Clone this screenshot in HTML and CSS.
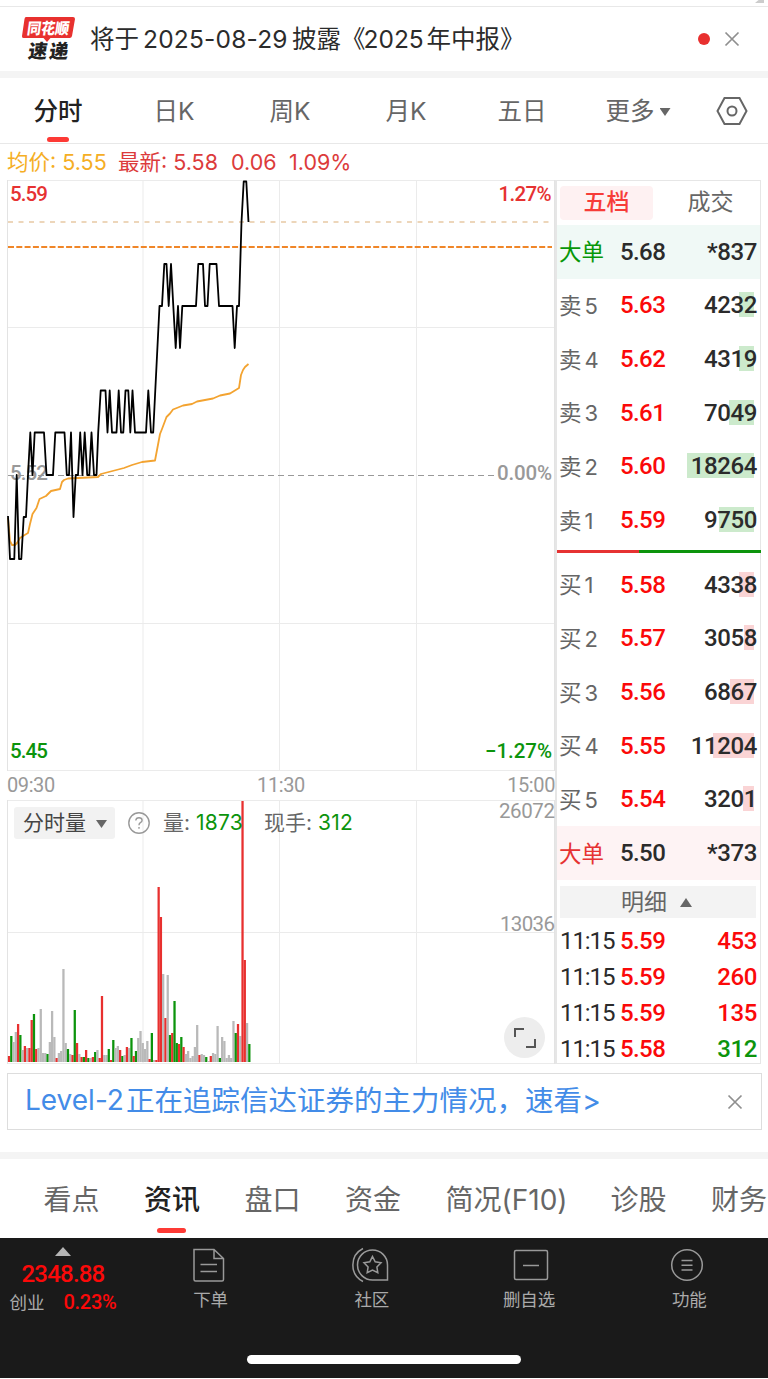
FILE: index.html
```html
<!DOCTYPE html>
<html lang="zh-CN">
<head>
    <meta charset="UTF-8">
    <meta name="viewport" content="width=device-width, initial-scale=1.0">
    <title>分时</title>
    <link rel="stylesheet" href="styles.css">
</head>
<body>
    <div class="top-edge"><i></i></div>

    <!-- Notice -->
    <header class="notice">
        <svg class="logo" width="56" height="48" viewBox="0 0 56 48">
            <path d="M5 2H52Q54 2 54 4L51 21Q50.600 23 48.600 23H29.500L26 27L22.500 23H2.500Q.600 23 1 21L3.500 4Q3.800 2 5 2Z" fill="#e8312f"/>
            <text class="logo-text" transform="translate(5.500 18.500) skewX(-8)" font-size="15.500" fill="#fff" textLength="42" lengthAdjust="spacingAndGlyphs">同花顺</text>
            <text class="logo-text" transform="translate(6.500 42.500) skewX(-8)" font-size="19" fill="#222" textLength="40">速递</text>
        </svg>
        <div class="notice-text"><span>将于</span><span class="date">2025-08-29</span><span>披露《</span><span class="year">2025</span><span>年中报》</span></div>
        <span class="dot"></span>
        <svg class="close" width="16" height="16" viewBox="0 0 16 16"><path d="M1.500 1.500L14.500 14.500M14.500 1.500L1.500 14.500"/></svg>
    </header>

    <!-- Period tabs -->
    <nav class="periods">
        <span class="active">分时</span>
        <span>日K</span>
        <span>周K</span>
        <span>月K</span>
        <span>五日</span>
        <span>更多<i class="caret-down"></i></span>
        <svg width="32" height="30" viewBox="0 0 32 30">
            <path d="M8.500 2H23.500L30.500 15L23.500 28H8.500L1.500 15Z"/>
            <circle cx="16" cy="15" r="4.500"/>
        </svg>
    </nav>

    <div class="summary">
        <span class="avg">均价: 5.55</span>
        <span>最新: 5.58</span>
        <span>0.06</span>
        <span>1.09%</span>
    </div>

    <main class="main">
        <div class="charts">
            <!-- Price chart -->
            <svg class="price" width="548" height="591" viewBox="7 180 548 591">
                <path class="grid" d="M7 180.500H555M7 327.500H555M7 623.500H555M7 770.500H555M143 180V771M279.500 180V771M416.500 180V771"/>
                <path class="grid edge" d="M7.500 180V771M554.500 180V771"/>
                <path class="dash last" d="M8 222H552"/>
                <path class="dash cost" d="M8 247H552"/>
                <path class="dash zero" d="M8 475.500H497"/>
                <text class="num gray" x="10" y="479.500" textLength="38">5.52</text>
                <polyline class="avg-line" points="8,518 10,541 12,545 15,545 17,543 20,538 23,536 28,533 30,524 32.500,514 36.500,508 39.500,499 46,496 51,491 60,489 62,482 64,480 68,478.500 98,477 101,474 124,468 132,465 142,462 155,460.500 157,450 160,434 162,429 166.500,417 170,413.500 173,409.500 183,405.500 192,404 197,401.500 213,398.500 220,395.500 230,393.500 239,388 241,375 243,370 245,367 248.500,364"/>
                <polyline class="price-line" points="8,516 10,559 14.300,559 16.700,475 19,559 21.300,559 23.700,517 26,517 28,475 30.300,432.500 32.500,475 34.700,432.500 44,432.500 46.500,475 53,475 55.300,432.500 64.500,432.500 66.800,475 69,475 71,432.500 73.500,517 75.700,475 78,475 80.200,432.500 82.500,475 84.700,432.500 87.200,475 89.300,475 91.500,432.500 94,475 96.500,475 98.200,432.500 100.700,390.500 105.500,390.500 107.500,432.500 109.700,390.500 112,432.500 116.500,432.500 118.700,390.500 121,432.500 123.300,432.500 125.500,390.500 128.300,390.500 130.300,432.500 132.500,390.500 135,432.500 146,432.500 148.300,390.500 151,432.500 153.200,432.500 155.300,390 159.500,306 162,306 164.300,264 166.500,264 168.700,306 171,264 173.300,306 175.700,348 178,306 180,348 182.300,306 196,306 198.300,264 203,264 205,306 207.500,306 209.700,264 216.500,264 219,306 232.500,306 234.700,348 237,306 239,306 241.500,222 243.700,181.500 246.300,181.500 248.500,222"/>
                <text class="num red" x="10" y="200.500" textLength="38">5.59</text>
                <text class="num red" x="498.500" y="200.500" textLength="53">1.27%</text>
                <text class="num gray" x="497" y="479.500" textLength="55">0.00%</text>
                <text class="num green" x="10" y="758" textLength="38">5.45</text>
                <text class="num green" x="485" y="758" textLength="67">−1.27%</text>
            </svg>

            <div class="axis"><span>09:30</span><span>11:30</span><span>15:00</span></div>

            <!-- Volume chart -->
            <div class="volume">
                <svg width="548" height="264" viewBox="7 800 548 264">
                    <path class="grid" d="M7 800.500H555M7 932.500H555M7 1063.500H555M143 800V1064M279.500 800V1064M416.500 800V1064"/>
                    <path class="grid edge" d="M7.500 800V1064M554.500 800V1064"/>
                    <g id="bars"></g>
                    <text class="num gray thin" x="499" y="818" textLength="56">26072</text>
                    <text class="num gray thin" x="500" y="931" textLength="55">13036</text>
                </svg>
                <div class="volume-bar">
                    <span class="picker">分时量<i class="caret-down"></i></span>
                    <svg width="24" height="24" viewBox="0 0 24 24"><circle cx="12" cy="12" r="10.200"/><path d="M8.800 9.500Q9 6.700 12 6.700T15.100 9.300Q15.100 10.700 13.400 11.700Q12 12.600 12 14.300M12 16V17.700"/></svg>
                    <span class="vol">量: <b>1873</b></span>
                    <span>现手: <b>312</b></span>
                </div>
                <span class="expand"><svg width="24" height="24" viewBox="0 0 24 24"><path d="M2 11V3H11M22 13V21H13"/></svg></span>
            </div>
        </div>

        <!-- Order book -->
        <aside class="book">
            <div class="book-tabs"><span class="active">五档</span><span>成交</span></div>
            <div class="row big sell"><span>大单</span><b>5.68</b><em>*837</em></div>
            <div class="row sell"><span>卖<i>5</i></span><b>5.63</b><em style="--w: 15px">4232</em></div>
            <div class="row sell"><span>卖<i>4</i></span><b>5.62</b><em style="--w: 15.5px">4319</em></div>
            <div class="row sell"><span>卖<i>3</i></span><b>5.61</b><em style="--w: 25px">7049</em></div>
            <div class="row sell"><span>卖<i>2</i></span><b>5.60</b><em style="--w: 67px">18264</em></div>
            <div class="row sell"><span>卖<i>1</i></span><b>5.59</b><em style="--w: 35px">9750</em></div>
            <div class="ratio"></div>
            <div class="row buy"><span>买<i>1</i></span><b>5.58</b><em style="--w: 15px">4338</em></div>
            <div class="row buy"><span>买<i>2</i></span><b>5.57</b><em style="--w: 10.5px">3058</em></div>
            <div class="row buy"><span>买<i>3</i></span><b>5.56</b><em style="--w: 24px">6867</em></div>
            <div class="row buy"><span>买<i>4</i></span><b>5.55</b><em style="--w: 41px">11204</em></div>
            <div class="row buy"><span>买<i>5</i></span><b>5.54</b><em style="--w: 11px">3201</em></div>
            <div class="row big buy"><span>大单</span><b>5.50</b><em>*373</em></div>
            <div class="detail-head">明细<i></i></div>
            <div class="tick"><span>11:15</span><b>5.59</b><em>453</em></div>
            <div class="tick"><span>11:15</span><b>5.59</b><em>260</em></div>
            <div class="tick"><span>11:15</span><b>5.59</b><em>135</em></div>
            <div class="tick"><span>11:15</span><b>5.58</b><em class="down">312</em></div>
        </aside>
    </main>

    <div class="banner">
        <span class="banner-en">Level-2</span><span>正在追踪信达证券的主力情况，速看&gt;</span>
        <svg class="close" width="16" height="16" viewBox="0 0 16 16"><path d="M1.500 1.500L14.500 14.500M14.500 1.500L1.500 14.500"/></svg>
    </div>

    <nav class="sections">
        <span>看点</span>
        <span class="active">资讯</span>
        <span>盘口</span>
        <span>资金</span>
        <span class="profile">简况(F10)</span>
        <span>诊股</span>
        <span>财务</span>
    </nav>

    <!-- Bottom bar -->
    <footer class="bottom">
        <div class="index">
            <i class="caret-up"></i>
            <strong>2348.88</strong>
            <div><span>创业</span><b>0.23%</b></div>
        </div>
        <div class="action order">
            <svg width="36" height="36" viewBox="0 0 36 36"><path d="M3 2.500H23L32.500 11.500V32.500Q32.500 34 31 34H4.500Q3 34 3 32.500ZM23 2.500V11.500H32.500M9.500 17.500H26M9.500 24.500H26"/></svg>
            <span>下单</span>
        </div>
        <div class="action club">
            <svg width="40" height="36" viewBox="0 0 40 36"><path d="M22.500 3A15 15 0 0 0 22.500 33H37.500V18A15 15 0 0 0 22.500 3ZM13 1.500A18.500 18.500 0 0 0 13 34.500"/><path d="M22.500 9.500L25.200 14.800L31 15.700L26.900 19.900L27.800 25.700L22.500 23L17.200 25.700L18.100 19.900L14 15.700L19.800 14.800Z"/></svg>
            <span>社区</span>
        </div>
        <div class="action remove">
            <svg width="36" height="36" viewBox="0 0 36 36"><rect x="1.500" y="3.500" width="33" height="29" rx="1.500"/><path d="M10 18.500H26"/></svg>
            <span>删自选</span>
        </div>
        <div class="action more">
            <svg width="36" height="36" viewBox="0 0 36 36"><circle cx="18" cy="18" r="15.300"/><path d="M12.500 13.500H23.500M12.500 18.200H23.500M12.500 22.900H23.500"/></svg>
            <span>功能</span>
        </div>
        <div class="home"></div>
    </footer>

    <script>
        // One entry per minute: r = up, g = down, n = flat
        const data = 'r6 g26 n20 n30 r38 g27 n12 r16 n14 r14 r42 g48 r13 n14 n53 n9 n9 g8 n20 n51 n25 r4 n9 n11 n93 n19 g13 n8 r7 g52 ' +
            'r19 n8 r5 g5 r12 g4 n4 r5 g10 n12 r4 r66 n7 n7 g13 r2 g22 n14 n16 r12 g6 n7 r15 n14 g24 r6 g11 n24 n31 n19 ' +
            'n13 n21 r3 g29 n2 r2 r175 r145 n88 r44 n87 g27 r29 g61 g19 r18 g25 r15 n8 n11 n4 n6 n15 n37 r7 n8 n7 g5 n1 r6 ' +
            'n9 n8 n36 g4 n25 n21 n4 n7 n4 n41 g29 r38 n26 r261 r102 n39 g18';
        const colors = { r: '#e8302f', g: '#0c940c', n: '#b9b9b9' };

        document.getElementById('bars').innerHTML = data.split(' ').map(function(item, i) {
            const h = Number(item.slice(1));
            const x = (7.9 + i * 2.267).toFixed(2);
            return '<rect x="' + x + '" y="' + (1062 - h) + '" width="2.27" height="' + h + '" fill="' + colors[item[0]] + '"/>';
        }).join('');
    </script>
</body>
</html>
```

FILE: styles.css
```css
:root {
    --red: #e63232;
    --bright-red: #fb0909;
    --green: #0c940c;
    --text: #2b2b2b;
    --text-gray: #666;
    --text-muted: #999;
    --sans: Inter, "Noto Sans CJK SC", sans-serif;
    --digits: Roboto, "Noto Sans CJK SC", sans-serif;
}

* {
    box-sizing: border-box;
}

body {
    margin: 0;
    width: 768px;
    height: 1379px;
    overflow: hidden;
    background: #fff;
    color: var(--text);
    font-family: var(--sans);
    white-space: nowrap;
}

i, em {
    font-style: normal;
}

svg {
    display: block;
    flex: none;
}

.top-edge {
    display: flex;
    justify-content: flex-end;
    height: 7px;
    padding-right: 4px;
    border-bottom: 1px solid #e8e8e8;
}

.top-edge i {
    width: 9px;
    height: 3px;
    background: #ccc;
    clip-path: polygon(40% 0, 100% 0, 100% 100%, 0 100%);
}

/* Notice */
.notice {
    display: flex;
    align-items: center;
    height: 71px;
    padding: 0 28px 7px 21px;
    border-bottom: 7px solid #f4f4f4;
}

.notice .logo {
    margin: 7px 13px 0 0;
}

.logo-text {
    font-family: "Noto Sans CJK SC", sans-serif;
    font-weight: 900;
}

.notice-text {
    display: flex;
    align-items: center;
    font-size: 24.5px;
    line-height: 36px;
    margin-top: 7px;
}

.notice-text .date {
    width: 153px;
    padding-left: 4px;
    letter-spacing: .2px;
}

.notice-text .year {
    width: 63px;
    margin-left: -2px;
}

.dot {
    width: 12px;
    height: 12px;
    margin: 7px 14px 0 auto;
    border-radius: 50%;
    background: #e8302f;
}

.close {
    fill: none;
    stroke: #8f8f8f;
    stroke-width: 1.7;
}

.notice .close {
    margin-top: 6px;
}

/* Period tabs */
.periods {
    display: grid;
    grid-template-columns: repeat(6, 116px) 72px;
    place-items: center;
    height: 66px;
    border-bottom: 1px solid #e8e8e8;
    color: var(--text-gray);
    font-size: 24.5px;
    line-height: 66px;
}

.periods span {
    height: 65px;
    line-height: 67px;
}

.periods .active,
.sections .active {
    position: relative;
    color: #222;
    font-weight: 500;
}

.periods .active::after,
.sections .active::after {
    content: "";
    position: absolute;
    left: 50%;
    bottom: 1px;
    width: 22px;
    height: 5px;
    margin-left: -11px;
    border-radius: 3px;
    background: #fd3a35;
}

.periods svg {
    fill: none;
    stroke: var(--text-gray);
    stroke-width: 2;
}

.caret-down {
    display: inline-block;
    width: 11px;
    height: 8px;
    margin-left: 5px;
    vertical-align: 4px;
    background: #666;
    clip-path: polygon(0 0, 100% 0, 50% 100%);
}

.summary {
    display: grid;
    grid-template-columns: 111px 113px 58px auto;
    height: 36px;
    padding-left: 7px;
    color: #dc3b3b;
    font-size: 21.5px;
    line-height: 36px;
}

.summary .avg {
    color: #f5ae24;
}

/* Charts */
.main {
    display: grid;
    grid-template-columns: 548px 206px;
    grid-template-rows: 884px;
    padding-left: 7px;
}

.grid {
    fill: none;
    stroke: #ebebeb;
}

.edge {
    stroke: #e3e3e3;
}

.dash {
    fill: none;
}

.last {
    stroke: #e8c9a4;
    stroke-width: 1.4;
    stroke-dasharray: 5 5.5;
}

.cost {
    stroke: #f08628;
    stroke-width: 1.8;
    stroke-dasharray: 6 2.3;
}

.zero {
    stroke: #999;
    stroke-dasharray: 6 4;
}

.avg-line,
.price-line {
    fill: none;
    stroke: #f3a330;
    stroke-width: 1.8;
    stroke-linejoin: round;
}

.price-line {
    stroke: #000;
}

.num {
    font: 500 20.5px var(--digits);
}

.red { fill: var(--red); }
.green { fill: var(--green); }
.gray { fill: #999; }

.num.thin {
    font-weight: 400;
}

.axis {
    display: flex;
    justify-content: space-between;
    height: 29px;
    color: var(--text-muted);
    font: 400 20px/29px var(--digits);
    letter-spacing: -.4px;
}

.volume {
    position: relative;
}

.volume-bar {
    position: absolute;
    top: 7px;
    left: 7px;
    display: flex;
    align-items: center;
    height: 32px;
    color: var(--text-gray);
    font-size: 21px;
    line-height: 34px;
}

.picker {
    width: 101px;
    margin-right: 12px;
    padding-left: 9px;
    border-radius: 3px;
    background: #f2f2f2;
    color: #444;
    line-height: 32px;
}

.picker .caret-down {
    margin-left: 10px;
    vertical-align: 2px;
}

.volume-bar svg {
    margin-right: 12px;
    fill: none;
    stroke: var(--text-muted);
    stroke-width: 1.4;
}

.volume-bar b {
    color: var(--green);
    font-weight: 400;
    letter-spacing: .2px;
}

.vol {
    width: 101px;
}

.expand {
    position: absolute;
    right: 10px;
    bottom: 6px;
    display: grid;
    place-items: center;
    width: 41px;
    height: 41px;
    border-radius: 50%;
    background: #ededed;
}

.expand svg {
    fill: none;
    stroke: #555;
    stroke-width: 2;
}

/* Order book */
.book {
    border: solid #e6e6e6;
    border-width: 1px 1px 1px 2px;
    font-family: var(--digits);
}

.book-tabs {
    display: flex;
    align-items: center;
    height: 44px;
    padding: 0 0 1px 3px;
    color: var(--text-gray);
    font-size: 23px;
    line-height: 34px;
    text-align: center;
}

.book-tabs span {
    width: 93px;
}

.book-tabs span + span {
    margin-left: 11px;
}

.book-tabs .active {
    border-radius: 4px;
    background: #fef1f2;
    color: #f73c38;
    font-weight: 500;
}

.row,
.tick {
    display: grid;
    grid-template-columns: 60px 70px 1fr;
    align-items: center;
    height: 53.67px;
    padding: 0 3px;
    font-size: 24px;
}

.row span {
    margin: -3px 0 0 -1px;
    color: var(--text-gray);
    font-size: 22.5px;
}

.row span i {
    margin-left: 3px;
    font-family: Inter, sans-serif;
    font-size: 22px;
}

.row b,
.tick b {
    color: var(--bright-red);
    font-weight: 500;
    letter-spacing: -.6px;
}

.row em,
.tick em {
    position: relative;
    z-index: 0;
    font-weight: 500;
    letter-spacing: -.4px;
    text-align: right;
}

.row em::before {
    content: "";
    position: absolute;
    z-index: -1;
    top: 1px;
    right: 3px;
    width: var(--w, 0);
    height: 25px;
    background: #cceacc;
}

.row.buy em::before {
    background: #fad4d5;
}

.big.sell { background: #f0f9f6; }
.big.buy { background: #fef3f4; }
.big.sell span { color: #079707; }
.big.buy span { color: var(--red); }
.row.big b { color: var(--text); }

.ratio {
    height: 3px;
    margin: 3px -1px 5px 0;
    background: linear-gradient(to right, #e63232 40%, #0c940c 40%);
}

.detail-head {
    height: 32px;
    margin: 6px 4px 5px 3px;
    padding-right: 3px;
    background: #f3f3f3;
    color: var(--text-gray);
    font-size: 23px;
    line-height: 33px;
    text-align: center;
}

.detail-head i {
    display: inline-block;
    width: 12px;
    height: 9px;
    margin-left: 13px;
    vertical-align: 3px;
    background: #666;
    clip-path: polygon(50% 0, 100% 100%, 0 100%);
}

.tick {
    height: 36px;
    color: var(--text);
}

.tick span {
    letter-spacing: -1.1px;
}

.tick em { color: var(--bright-red); }
.tick .down { color: var(--green); }

/* Banner */
.banner {
    display: flex;
    align-items: center;
    width: 755px;
    height: 57px;
    margin: 9px 0 0 7px;
    padding: 0 18px 0 17px;
    border: 1px solid #ddd;
    color: #438ce8;
    font-size: 28.5px;
    line-height: 53px;
}

.banner span {
    height: 55px;
}

.banner-en {
    width: 101px;
    font-size: 28px;
}

.banner .close {
    margin-left: auto;
}

/* Section tabs */
.sections {
    display: flex;
    gap: 44.5px;
    height: 86px;
    margin-top: 22px;
    padding-left: 43.5px;
    border-top: 7px solid #f4f4f4;
    color: var(--text-gray);
    font-size: 28px;
    line-height: 83px;
}

.sections .active::after {
    bottom: 5px;
    width: 29px;
    margin-left: -15px;
}

.sections .profile {
    width: 120.5px;
}

/* Bottom bar */
.bottom {
    display: grid;
    grid-template-columns: 131px repeat(4, 1fr);
    grid-template-rows: 121px 9px;
    height: 140px;
    background: #1a1a1a;
    color: #aaa;
    font-size: 17.5px;
}

.index {
    display: flex;
    flex-direction: column;
    align-items: center;
    width: 126px;
    padding-top: 9px;
}

.caret-up {
    width: 16px;
    height: 9px;
    background: #b5b5b5;
    clip-path: polygon(50% 0, 100% 100%, 0 100%);
}

.index strong {
    margin-top: 4px;
    color: var(--bright-red);
    font: 500 24px/28px var(--digits);
    letter-spacing: -.8px;
}

.index div {
    display: flex;
    gap: 19px;
    line-height: 29px;
}

.index b {
    color: var(--bright-red);
    font: 500 20px/29px var(--digits);
    letter-spacing: -.3px;
}

.action {
    display: flex;
    flex-direction: column;
    align-items: center;
    padding-top: 9px;
    line-height: 33px;
}

.action svg {
    fill: none;
    stroke: #999;
    stroke-width: 1.5;
}

.order svg { margin-left: -4px; }
.club span { margin-left: 4px; }
.remove svg { margin-left: 3px; }
.more svg { margin-left: -3px; }
.more span { margin-left: 2px; }

.home {
    grid-column: 1 / -1;
    justify-self: center;
    width: 274px;
    height: 9px;
    margin-top: -4px;
    border-radius: 5px;
    background: #fff;
}
```
